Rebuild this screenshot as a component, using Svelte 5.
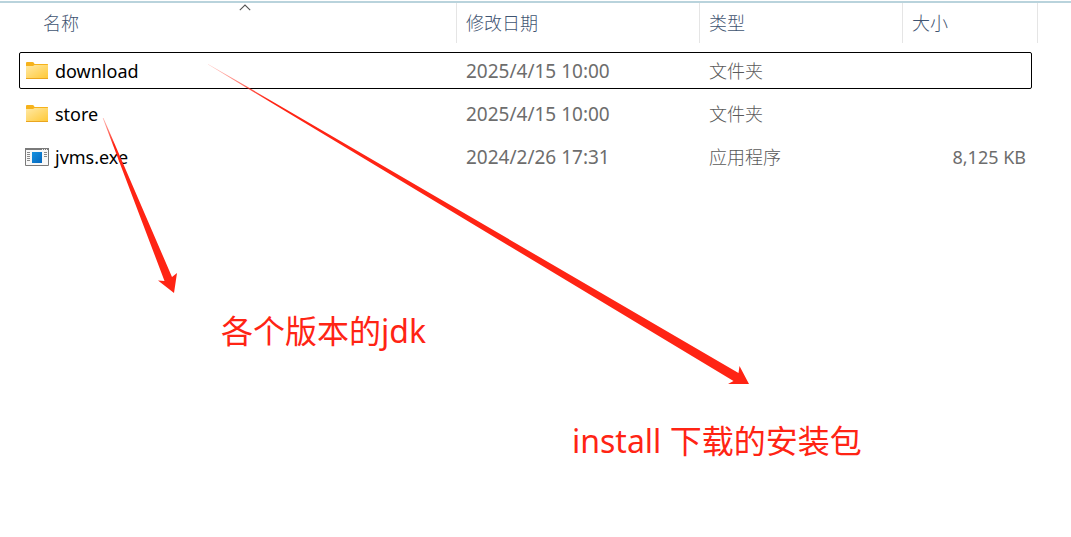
<script>
  const files = [
    { name: 'download', kind: 'folder', date: '2025/4/15 10:00', type: '文件夹', size: '', focused: true },
    { name: 'store', kind: 'folder', date: '2025/4/15 10:00', type: '文件夹', size: '' },
    { name: 'jvms.exe', kind: 'exe', date: '2024/2/26 17:31', type: '应用程序', size: '8,125 KB' }
  ]
</script>

<main>
  <table>
    <colgroup>
      <col />
      <col class="col-date" />
      <col class="col-type" />
      <col class="col-size" />
    </colgroup>
    <thead>
      <tr>
        <th class="first" aria-sort="ascending">
          <div class="head">
            名称
            <svg class="sort" viewBox="0 0 12 7" width="12" height="7">
              <path d="M.8 6.2 6 1l5.2 5.2" fill="none" stroke="#555" stroke-width="1.1" />
            </svg>
          </div>
        </th>
        <th><div class="head">修改日期</div></th>
        <th><div class="head">类型</div></th>
        <th><div class="head">大小</div></th>
      </tr>
    </thead>
    <tbody>
      {#each files as file (file.name)}
        <tr class:focused={file.focused}>
          <td>
            <div class="name">
              {#if file.kind === 'folder'}
                <svg viewBox="0 0 24 18" width="24" height="18">
                  <defs>
                    <linearGradient id="folder-{file.name}" x1="0" y1="0" x2="1" y2="1">
                      <stop offset="0" stop-color="#ffe9a6" />
                      <stop offset="1" stop-color="#ffc937" />
                    </linearGradient>
                  </defs>
                  <path d="M1 1Q1 0 2 0h5.500q.8 0 1.200.6L9.600 2H22.500q.5 0 .5.500V8H1z" fill="#f6b21b" />
                  <path d="M1 4h7l1.500-1H23v13H1z" fill="url(#folder-{file.name})" />
                  <path d="M1 16h22v1H1z" fill="#eaa51f" />
                </svg>
              {:else}
                <svg viewBox="0 0 24 18" width="24" height="18">
                  <path d="M.5.5h23v17H.5z" fill="#f8f8f8" stroke="#7a7a7a" />
                  <path d="M0 0h24v2H0z" fill="#7a7a7a" />
                  <path d="M17 1.500h1M19 1.500h1M21 1.500h1" stroke="#eee" />
                  <path d="M2 4.500h3M2 6.500h3M2 8.500h3M2 10.500h3M2 12.500h3M19 4.500h3M19 6.500h3M19 8.500h3" stroke="#8a8a8a" />
                  <path d="M7 4h10v11H7z" fill="url(#exe)" />
                  <defs>
                    <linearGradient id="exe" x1="0" y1="0" x2="1" y2="1">
                      <stop offset="0" stop-color="#1592e0" />
                      <stop offset="1" stop-color="#0667bd" />
                    </linearGradient>
                  </defs>
                </svg>
              {/if}
              <span>{file.name}</span>
            </div>
          </td>
          <td class="date">{file.date}</td>
          <td class="type">{file.type}</td>
          <td class="size">{file.size}</td>
        </tr>
      {/each}
    </tbody>
  </table>

  <!-- hand drawn notes over the list -->
  <svg class="arrows" viewBox="0 0 760 400" width="760" height="400">
    <defs>
      <linearGradient id="fade-store" gradientUnits="userSpaceOnUse" x1="103" y1="118" x2="114" y2="145">
        <stop offset="0" stop-color="#ff2414" stop-opacity=".3" />
        <stop offset="1" stop-color="#ff2414" />
      </linearGradient>
      <linearGradient id="fade-download" gradientUnits="userSpaceOnUse" x1="208" y1="64" x2="270" y2="100">
        <stop offset="0" stop-color="#ff2414" stop-opacity=".2" />
        <stop offset="1" stop-color="#ff2414" />
      </linearGradient>
    </defs>
    <path d="M102.700 118h.8L172 277 177 273 174 293 158 280.500 164.500 281z" fill="url(#fade-store)" />
    <path d="M208 64.600V63.900L738.500 373 739.500 366 749 384H728l5.500-3z" fill="url(#fade-download)" />
  </svg>
  <p class="note note-store">各个版本的jdk</p>
  <p class="note note-download">install 下载的安装包</p>
</main>

<style>
  :global(body) {
    margin: 0;
    background: #fff;
  }

  main {
    position: relative;
    box-sizing: border-box;
    min-height: 100vh;
    padding: 3px 33px 0 19px;
    background: linear-gradient(#b9d3dc, #b9d3dc) 0 1px / 100% 2px no-repeat;
    font-family: 'Noto Sans', 'Noto Sans CJK SC', sans-serif;
    font-size: 18px;
    line-height: 24px;
    color: #6d6d6d;
  }

  table {
    width: 100%;
    table-layout: fixed;
    border-collapse: separate;
    border-spacing: 0;
  }

  .col-date {
    width: 243px;
  }

  .col-type {
    width: 203px;
  }

  .col-size {
    width: 135px;
  }

  th {
    padding: 0 0 6px;
    font-weight: 300;
    text-align: left;
    color: #3f5471;
  }

  .head {
    position: relative;
    display: flex;
    align-items: center;
    box-sizing: border-box;
    height: 40px;
    padding-left: 9px;
    border-right: 1px solid #e5e5e5;
  }

  .first .head {
    margin-left: 15px;
  }

  .sort {
    position: absolute;
    top: 1px;
    left: calc(50% - 6px);
  }

  td {
    height: 43px;
    padding: 0 12px 0 9px;
    white-space: nowrap;
  }

  td:first-child {
    padding-left: 6px;
    color: #000;
  }

  tbody tr {
    position: relative;
  }

  .focused td:first-child::after {
    content: '';
    position: absolute;
    inset: 3px 6px 3px 0;
    border: 1px solid #000;
    border-radius: 2px;
  }

  .name {
    display: flex;
    align-items: center;
    gap: 6px;
  }

  .date {
    font-size: 19px;
  }

  .type {
    font-weight: 300;
    color: #5a5a5a;
  }

  .size {
    text-align: right;
  }

  .arrows {
    position: absolute;
    top: 0;
    left: 0;
    pointer-events: none;
  }

  .note {
    position: absolute;
    margin: 0;
    font-size: 32px;
    line-height: 40px;
    white-space: nowrap;
    color: #ff2414;
  }

  .note-store {
    top: 311px;
    left: 221px;
  }

  .note-download {
    top: 421px;
    left: 572px;
  }
</style>
